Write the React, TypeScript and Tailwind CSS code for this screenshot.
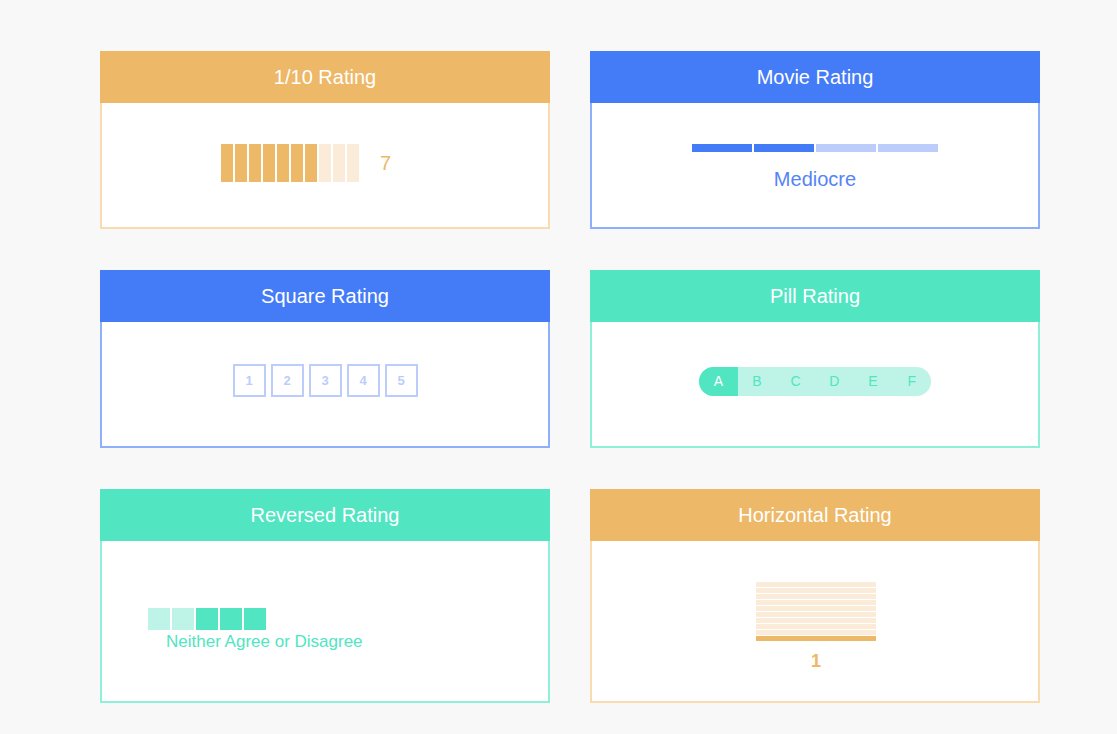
import React from "react";

const font = { fontFamily: '"Liberation Sans", Arial, sans-serif' };

function Card({
  title,
  head,
  border,
  bodyClass,
  children,
}: {
  title: string;
  head: string;
  border: string;
  bodyClass: string;
  children: React.ReactNode;
}) {
  return (
    <div className="flex flex-col w-[450px]">
      <div className={`h-[52px] flex items-center justify-center text-white text-[20px] ${head}`}>
        {title}
      </div>
      <div className={`bg-white border-2 border-t-0 ${border} ${bodyClass}`}>{children}</div>
    </div>
  );
}

export default function App() {
  const tenBars = Array.from({ length: 10 }, (_, i) => i < 7);
  const movie = [true, true, false, false];
  const pills = ["A", "B", "C", "D", "E", "F"];
  const reversed = [false, false, true, true, true];
  const horizontal = Array.from({ length: 10 }, (_, i) => i === 9);

  return (
    <div className="min-h-screen bg-[#f8f8f8] pl-[100px] pt-[51px]" style={font}>
      <div className="grid grid-cols-[450px_450px] gap-x-10 gap-y-[41px]">
        {/* 1/10 */}
        <Card title="1/10 Rating" head="bg-[#edb867]" border="border-[#f8dbaf]" bodyClass="h-[126px] flex items-center pl-[119px] pb-[4px]">
          <div className="flex gap-[2px]">
            {tenBars.map((on, i) => (
              <div key={i} className={`w-[12px] h-[38px] ${on ? "bg-[#edb867]" : "bg-[#fbebd9]"}`} />
            ))}
          </div>
          <span className="ml-[21px] text-[20px] text-[#edb867]">7</span>
        </Card>

        {/* Movie */}
        <Card title="Movie Rating" head="bg-[#447bf7]" border="border-[#8eaffa]" bodyClass="h-[126px] flex flex-col items-center pt-[41px]">
          <div className="flex gap-[2px]">
            {movie.map((on, i) => (
              <div key={i} className={`w-[60px] h-[8px] ${on ? "bg-[#447bf7]" : "bg-[#bccdfb]"}`} />
            ))}
          </div>
          <div className="mt-[16px] text-[20px] leading-[23px] text-[#5584f6]">Mediocre</div>
        </Card>

        {/* Square */}
        <Card title="Square Rating" head="bg-[#447bf7]" border="border-[#8eaffa]" bodyClass="h-[126px] flex justify-center pt-[42px]">
          <div className="flex gap-[5px]">
            {[1, 2, 3, 4, 5].map((n) => (
              <div
                key={n}
                className="w-[33px] h-[33px] border-2 border-[#bccdfb] flex items-center justify-center text-[13px] font-bold text-[#bccdfb]"
              >
                {n}
              </div>
            ))}
          </div>
        </Card>

        {/* Pill */}
        <Card title="Pill Rating" head="bg-[#51e5c2]" border="border-[#8ef0d8]" bodyClass="h-[126px] flex justify-center pt-[45px]">
          <div className="flex w-[232px] h-[29px] rounded-full overflow-hidden bg-[#bdf4e7]">
            {pills.map((p, i) => (
              <div
                key={p}
                className={`flex-1 flex items-center justify-center text-[14px] ${
                  i === 0 ? "bg-[#51e5c2] text-white" : "text-[#51e5c2]"
                }`}
              >
                {p}
              </div>
            ))}
          </div>
        </Card>

        {/* Reversed */}
        <Card title="Reversed Rating" head="bg-[#51e5c2]" border="border-[#8ef0d8]" bodyClass="h-[162px] pt-[67px] pl-[46px]">
          <div className="flex gap-[2px]">
            {reversed.map((on, i) => (
              <div key={i} className={`w-[22px] h-[22px] ${on ? "bg-[#51e5c2]" : "bg-[#bdf4e7]"}`} />
            ))}
          </div>
          <div className="mt-[2px] ml-[18px] text-[17px] leading-[20px] text-[#51e5c2]">Neither Agree or Disagree</div>
        </Card>

        {/* Horizontal */}
        <Card title="Horizontal Rating" head="bg-[#edb867]" border="border-[#f8dbaf]" bodyClass="h-[162px] flex flex-col items-center pt-[41px] pl-[2px]">
          <div className="flex flex-col gap-[1px]">
            {horizontal.map((on, i) => (
              <div key={i} className={`w-[120px] h-[5px] ${on ? "bg-[#edb867]" : "bg-[#fbebd9]"}`} />
            ))}
          </div>
          <div className="mt-[10px] text-[18px] leading-[21px] font-bold text-[#edb867]">1</div>
        </Card>
      </div>
    </div>
  );
}
